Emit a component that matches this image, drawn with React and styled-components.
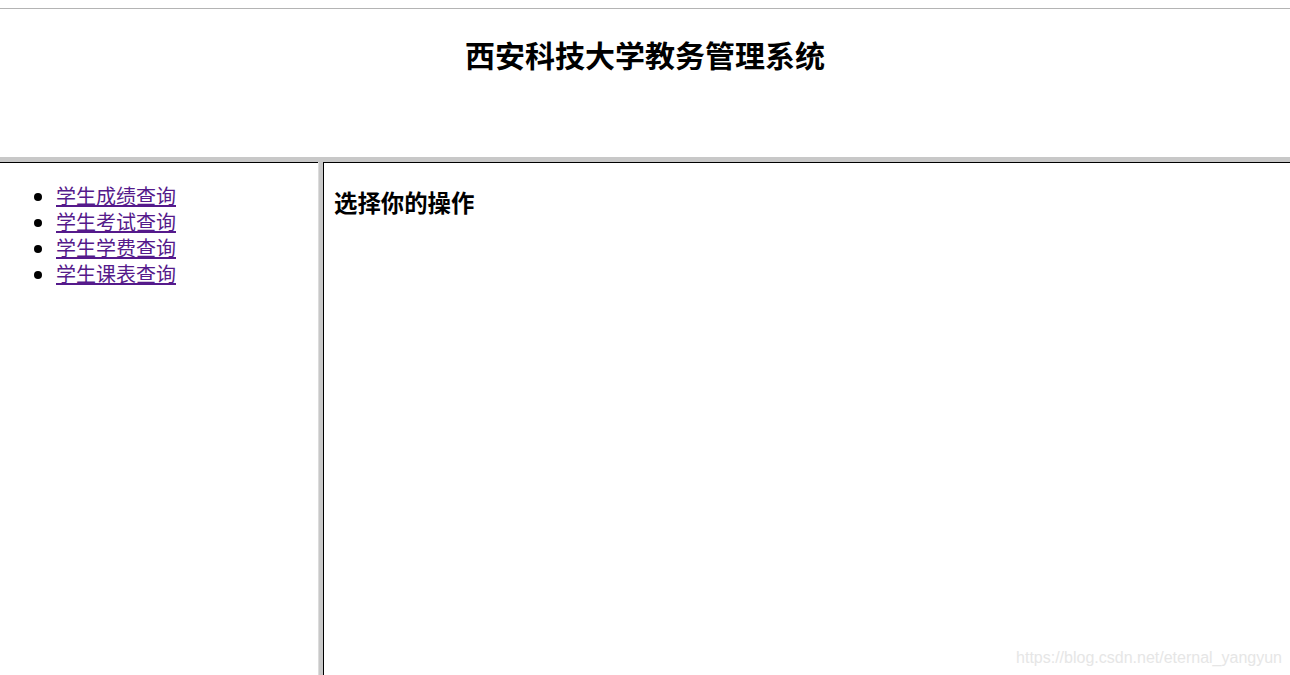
import styled, { createGlobalStyle } from 'styled-components';

const GlobalStyle = createGlobalStyle`
  html, body {
    margin: 0;
    padding: 0;
    background: #fff;
    overflow: hidden;
  }
  body {
    font-family: "Liberation Sans", "Noto Sans CJK SC", sans-serif;
  }
`;

const Page = styled.div`
  position: relative;
  display: flex;
  flex-direction: column;
  width: 1290px;
  height: 675px;
  padding-top: 8px;
  box-sizing: border-box;
`;

const TopFrame = styled.header`
  height: 148px;
  border-top: 1px solid #b4b4b4;
  display: flex;
  justify-content: center;
`;

const Title = styled.h2`
  margin: 26px 0 0;
  font-size: 30px;
  line-height: 38px;
  font-weight: bold;
  color: #000;
  font-family: "Microsoft YaHei", "Noto Sans CJK SC", sans-serif;
`;

const FrameRow = styled.div`
  flex: 1;
  display: flex;
  border-top: 5px solid #c8c8c8;
  min-height: 0;
`;

const FrameDivider = styled.div`
  width: 5px;
  background: #c8c8c8;
  border-left: 1px solid #dcdcdc;
  box-sizing: border-box;
`;

const SideFrame = styled.nav`
  width: 318px;
  border-top: 1px solid #000;
  box-sizing: border-box;
`;

const MainFrame = styled.main`
  flex: 1;
  border-top: 1px solid #000;
  border-left: 1px solid #000;
  padding: 12px 10px;
`;

const MenuList = styled.ul`
  margin: 20px 0 0;
  padding-left: 56px;
  list-style: disc;
  font-size: 20px;
  line-height: 26px;
  font-family: "Microsoft YaHei", "Noto Sans CJK SC", sans-serif;
`;

const MenuLink = styled.a`
  color: #551a8b;
  text-decoration: underline;
`;

const Heading = styled.h3`
  margin: 12px 0 0;
  font-size: 23.4px;
  line-height: 30px;
  font-weight: bold;
  color: #000;
  font-family: "Microsoft YaHei", "Noto Sans CJK SC", sans-serif;
`;

const Watermark = styled.span`
  position: absolute;
  right: 8px;
  bottom: 8px;
  font-family: "Liberation Sans", Arial, sans-serif;
  font-size: 16px;
  color: #e6e6e6;
`;

const menuItems = ['学生成绩查询', '学生考试查询', '学生学费查询', '学生课表查询'];

export default function App() {
  return (
    <>
      <GlobalStyle />
      <Page>
        <TopFrame>
          <Title>西安科技大学教务管理系统</Title>
        </TopFrame>
        <FrameRow>
          <SideFrame>
            <MenuList>
              {menuItems.map((item) => (
                <li key={item}>
                  <MenuLink href="#">{item}</MenuLink>
                </li>
              ))}
            </MenuList>
          </SideFrame>
          <FrameDivider />
          <MainFrame>
            <Heading>选择你的操作</Heading>
          </MainFrame>
        </FrameRow>
        <Watermark>https://blog.csdn.net/eternal_yangyun</Watermark>
      </Page>
    </>
  );
}
